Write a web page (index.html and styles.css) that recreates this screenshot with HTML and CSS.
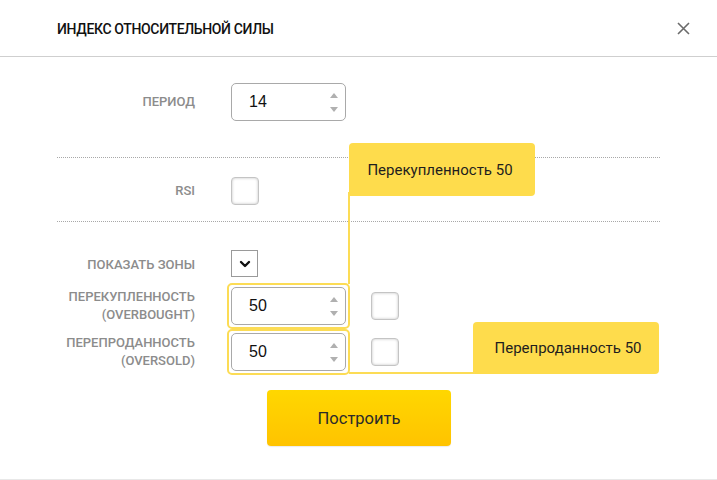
FILE: index.html
```html
<!DOCTYPE html>
<html lang="ru">
<head>
<meta charset="utf-8">
<title>Индекс относительной силы</title>
<link rel="stylesheet" href="styles.css">
</head>
<body>
<div class="modal">
  <header class="head">
    <h1 class="title">ИНДЕКС ОТНОСИТЕЛЬНОЙ СИЛЫ</h1>
    <button class="close" aria-label="Закрыть">
      <svg width="13" height="13" viewBox="0 0 13 13"><path d="M1 1L12 12M12 1L1 12" stroke="#6b6b6b" stroke-width="1.6" fill="none"/></svg>
    </button>
  </header>
  <div class="body">
    <div class="row row-period">
      <div class="label">ПЕРИОД</div>
      <div class="num"><span class="val">14</span><span class="spin"><i class="up"></i><i class="down"></i></span></div>
    </div>
    <div class="sep"></div>
    <div class="row row-rsi">
      <div class="label">RSI</div>
      <div class="box"></div>
    </div>
    <div class="sep"></div>
    <div class="row row-zones">
      <div class="label">ПОКАЗАТЬ ЗОНЫ</div>
      <div class="check">
        <svg width="12" height="9" viewBox="0 0 12 9"><path d="M2 3L6 7L10 3" stroke="#111" stroke-width="2.4" fill="none" stroke-linecap="round" stroke-linejoin="round"/></svg>
      </div>
    </div>
    <div class="row row-level">
      <div class="label">ПЕРЕКУПЛЕННОСТЬ<br>(OVERBOUGHT)</div>
      <div class="frame"><div class="num"><span class="val">50</span><span class="spin"><i class="up"></i><i class="down"></i></span></div></div>
      <div class="box"></div>
    </div>
    <div class="row row-level">
      <div class="label">ПЕРЕПРОДАННОСТЬ<br>(OVERSOLD)</div>
      <div class="frame"><div class="num"><span class="val">50</span><span class="spin"><i class="up"></i><i class="down"></i></span></div></div>
      <div class="box"></div>
    </div>
    <div class="actions">
      <button class="build">Построить</button>
    </div>

    <div class="tip tip-over">Перекупленность 50</div>
    <div class="tip tip-under">Перепроданность 50</div>
    <div class="wire wire-v"></div>
    <div class="wire wire-h"></div>
  </div>
</div>
</body>
</html>
```

FILE: styles.css
```css
* { box-sizing: border-box; }
html, body { margin: 0; padding: 0; background: #fff; }
body { font-family: Roboto, "Noto Sans", Arial, sans-serif; }

.modal {
  width: 717px;
  height: 480px;
  background: #fff;
  position: relative;
  border-bottom: 1px solid #e8e8e8;
}

.head {
  height: 57px;
  border-bottom: 1px solid #cfcfcf;
  display: flex;
  align-items: center;
  justify-content: space-between;
  padding: 0 27px 0 57px;
}
.title {
  margin: 0;
  font-size: 14px;
  font-weight: 500;
  color: #111;
  letter-spacing: -0.35px;
  padding-top: 2px;
}
.close {
  border: 0;
  background: none;
  padding: 0;
  width: 13px;
  height: 13px;
  display: flex;
}

.body {
  position: relative;
  padding: 26px 57px 0;
}

.row {
  display: grid;
  grid-template-columns: 138px auto auto;
  column-gap: 36px;
  align-items: center;
  justify-content: start;
}
.label {
  text-align: right;
  font-size: 13px;
  font-weight: 500;
  color: #8c8c8c;
  line-height: 18px;
  white-space: nowrap;
}
.sep {
  border-top: 1px dotted #a8a8a8;
}
.row-period + .sep { margin-top: 36px; }
.row-rsi { padding: 19px 0 16px; }
.row-zones { margin-top: 28px; margin-bottom: 6px; }
.row-zones .label { padding-top: 3px; }

.num {
  width: 115px;
  height: 38px;
  border: 1px solid #a9a9a9;
  border-radius: 5px;
  display: flex;
  align-items: center;
  justify-content: space-between;
  padding: 0 7px 0 17px;
  font-family: "Liberation Sans", Arial, sans-serif;
  font-size: 16px;
  color: #111;
  background: #fff;
}
.spin {
  display: flex;
  flex-direction: column;
  gap: 9px;
}
.spin i {
  display: block;
  width: 0;
  height: 0;
  border-left: 4px solid transparent;
  border-right: 4px solid transparent;
}
.spin .up { border-bottom: 5px solid #b0b0b0; }
.spin .down { border-top: 5px solid #b0b0b0; }

.box {
  width: 28px;
  height: 28px;
  border: 1px solid #c4c4c4;
  border-radius: 4px;
  background: #fff;
  box-shadow: inset 0 0 3px rgba(0,0,0,0.25);
}
.check {
  width: 27px;
  height: 27px;
  border: 1px solid #9a9a9a;
  display: flex;
  align-items: center;
  justify-content: center;
  background: #fff;
}

.row-level { column-gap: 32px; }
.row-level .box { margin-left: -11px; }
.frame {
  border: 2px solid #fcdc55;
  border-radius: 5px;
  padding: 2px;
}

.actions {
  display: flex;
  justify-content: center;
  margin-top: 15px;
  padding-left: 1px;
}
.build {
  width: 184px;
  height: 56px;
  border: 0;
  border-radius: 4px;
  background: linear-gradient(#ffd700, #ffc300);
  font-family: Roboto, "Noto Sans", sans-serif;
  font-size: 16.5px;
  color: #2a2a2a;
  box-shadow: 0 1px 1px rgba(0,0,0,0.08);
}

.tip {
  position: absolute;
  width: 186px;
  height: 53px;
  background: #fedc4c;
  border-radius: 4px;
  font-size: 15px;
  color: #1e1e1e;
  display: flex;
  align-items: center;
  justify-content: center;
}
.tip-over { left: 349px; top: 86px; border-bottom-left-radius: 0; padding-right: 4px; }
.tip-under { left: 473px; top: 265px; height: 52px; border-bottom-left-radius: 0; padding-left: 4px; }
.wire {
  position: absolute;
  background: #fcdc55;
}
.wire-v { left: 348px; top: 135px; width: 2px; height: 92px; }
.wire-h { left: 349px; top: 315px; width: 126px; height: 2px; }
```
